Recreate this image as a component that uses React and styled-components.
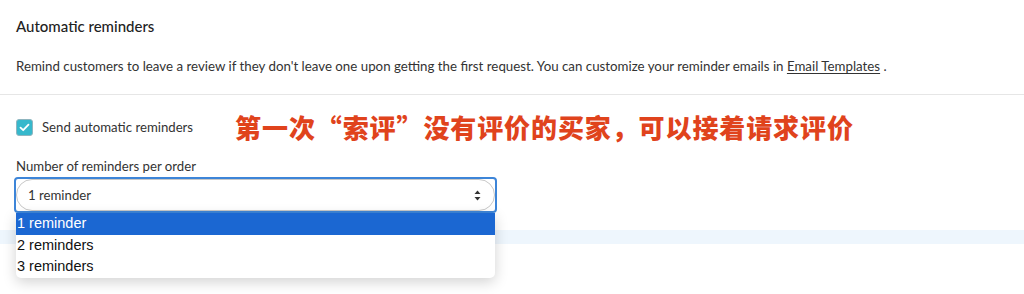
import React from "react";
import styled, { createGlobalStyle } from "styled-components";

const Global = createGlobalStyle`
  html, body {
    margin: 0;
    padding: 0;
    background: #ffffff;
  }
  body {
    font-family: Lato, "Open Sans", "Noto Sans", sans-serif;
    color: #303030;
  }
`;

const Page = styled.div`
  width: 1024px;
  height: 294px;
  overflow: hidden;
  background: #fff;
`;

const Header = styled.section`
  padding: 16px 16px 0;
  height: 78px;
  border-bottom: 1px solid #e6e6e6;
`;

const Title = styled.h2`
  margin: 0;
  font-size: 15px;
  font-weight: 500;
  line-height: 20px;
  color: #222;
`;

const Description = styled.p`
  margin: 20px 0 0;
  font-size: 13.3px;
  line-height: 20px;
  color: #333;
`;

const Link = styled.a`
  color: #333;
  text-decoration: underline;
  text-underline-offset: 2px;
`;

const Settings = styled.section`
  padding: 20px 16px 0;
`;

const CheckRow = styled.div`
  display: flex;
  align-items: center;
  height: 24px;
`;

const Box = styled.span`
  width: 17px;
  height: 17px;
  border-radius: 3px;
  background: #36b8cc;
  border: 1px solid #8fb5bf;
  box-sizing: border-box;
  display: flex;
  align-items: center;
  justify-content: center;
`;

const CheckLabel = styled.span`
  margin-left: 9px;
  font-size: 13.2px;
  color: #333;
`;

const Annotation = styled.span`
  margin-left: 42px;
  font-family: "Noto Sans CJK SC", sans-serif;
  font-weight: 900;
  font-size: 26px;
  letter-spacing: 0.9px;
  color: #e0431c;
  line-height: 26px;
`;

const FieldLabel = styled.div`
  margin-top: 19px;
  font-size: 13.2px;
  line-height: 16px;
  color: #333;
`;

const SelectWrap = styled.div`
  position: relative;
  margin-top: 3px;
  margin-left: -2px;
  width: 483px;
  height: 36px;
  border: 2px solid #3d85d8;
  border-radius: 4px;
  box-sizing: border-box;
`;

const SelectFace = styled.div`
  height: 32px;
  border: 1px solid #c8c8c8;
  border-radius: 17px;
  box-sizing: border-box;
  display: flex;
  align-items: center;
  justify-content: space-between;
  padding: 0 13px 0 11px;
  font-size: 13.2px;
  color: #333;
  background: #fff;
`;

const Band = styled.div`
  margin-top: 17px;
  height: 14px;
  background: #eef6fd;
`;

const Menu = styled.ul`
  position: absolute;
  top: 34px;
  left: 0;
  width: 479px;
  margin: 0;
  padding: 0;
  list-style: none;
  background: #fff;
  border-radius: 0 0 5px 5px;
  box-shadow: 0 4px 14px rgba(0, 0, 0, 0.18);
  overflow: hidden;
  z-index: 2;
`;

const Option = styled.li`
  height: 21.7px;
  line-height: 21.7px;
  padding-left: 1px;
  font-family: "Liberation Sans", Arial, sans-serif;
  font-size: 14.5px;
  color: ${(p) => (p.$active ? "#fff" : "#111")};
  background: ${(p) => (p.$active ? "#1b67d2" : "transparent")};
`;

const options = ["1 reminder", "2 reminders", "3 reminders"];

export default function App() {
  return (
    <Page>
      <Global />
      <Header>
        <Title>Automatic reminders</Title>
        <Description>
          Remind customers to leave a review if they don't leave one upon
          getting the first request. You can customize your reminder emails in{" "}
          <Link>Email Templates</Link> .
        </Description>
      </Header>
      <Settings>
        <CheckRow>
          <Box>
            <svg width="11" height="9" viewBox="0 0 11 9">
              <path
                d="M1.5 4.6 L4.2 7.2 L9.5 1.6"
                fill="none"
                stroke="#fff"
                strokeWidth="1.8"
                strokeLinecap="round"
                strokeLinejoin="round"
              />
            </svg>
          </Box>
          <CheckLabel>Send automatic reminders</CheckLabel>
          <Annotation>第一次“索评”没有评价的买家，可以接着请求评价</Annotation>
        </CheckRow>
        <FieldLabel>Number of reminders per order</FieldLabel>
        <SelectWrap>
          <SelectFace>
            <span>1 reminder</span>
            <svg width="7" height="11" viewBox="0 0 7 11">
              <path d="M3.5 0.5 L6.5 4 L0.5 4 Z" fill="#333" />
              <path d="M3.5 10.5 L6.5 7 L0.5 7 Z" fill="#333" />
            </svg>
          </SelectFace>
          <Menu>
            {options.map((o, i) => (
              <Option key={o} $active={i === 0}>
                {o}
              </Option>
            ))}
          </Menu>
        </SelectWrap>
      </Settings>
      <Band />
    </Page>
  );
}
